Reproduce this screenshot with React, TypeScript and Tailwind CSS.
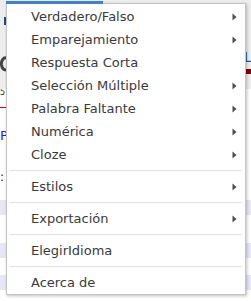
import React from "react";

const Arrow = () => (
  <svg width="5" height="8" viewBox="0 0 5 8" className="shrink-0">
    <path d="M0.5 0.5 L4.5 4 L0.5 7.5 Z" fill="#4d4d4d" />
  </svg>
);

type Item = { label: string; sub?: boolean } | "sep";

const items: Item[] = [
  { label: "Verdadero/Falso", sub: true },
  { label: "Emparejamiento", sub: true },
  { label: "Respuesta Corta" },
  { label: "Selección Múltiple", sub: true },
  { label: "Palabra Faltante", sub: true },
  { label: "Numérica", sub: true },
  { label: "Cloze", sub: true },
  "sep",
  { label: "Estilos", sub: true },
  "sep",
  { label: "Exportación", sub: true },
  "sep",
  { label: "ElegirIdioma" },
  "sep",
  { label: "Acerca de" },
];

export default function App() {
  return (
    <div
      className="relative w-[251px] h-[301px] overflow-hidden bg-white"
      style={{ fontFamily: '"DejaVu Sans", sans-serif' }}
    >
      {/* background page (mostly hidden behind the menu) */}
      <div className="flex flex-col">
        <div className="h-[89px] bg-[#ededed] flex justify-between pt-[17px]">
          <div className="flex flex-col items-start">
            <div className="ml-[4px] w-[2px] h-[8px] bg-[#2a4a7a]" />
            <svg width="7" height="16" viewBox="0 0 7 16" className="mt-[31px]">
              <path d="M7 2 C3 1 1 5 1.5 9 C2 12 4 14 6 14" stroke="#444" strokeWidth="3" fill="none" />
            </svg>
          </div>
          <div className="flex flex-col items-end">
            <div className="mt-[32px] -mr-[1px] w-[8px] text-[14px] leading-[16px] text-[#2455a8]">L</div>
            <div className="mt-[4px] w-[6px] h-[5px] bg-[#8b0000]" />
          </div>
        </div>
        <div className="flex flex-col items-start">
          <div className="w-[6px] h-[9px] bg-white text-[8px] leading-[8px] text-[#333] overflow-hidden">5</div>
          <div className="mt-[9px] w-[6px] h-px bg-[#e00000]" />
          <div className="mt-[20px] text-[13px] leading-[16px] text-[#1a1aff]">Pe</div>
          <div className="mt-[26px] text-[12px] leading-[14px] text-[#222]">:</div>
        </div>
        <div className="mt-[16px] flex flex-col gap-[28px]">
          <div className="h-[15px] bg-[#e6e6f7]" />
          <div className="h-[15px] bg-[#e6e6f7]" />
        </div>
        <div className="mt-[17px] h-[15px] bg-[#e6e6f7]" />
        <div className="mt-[15px] h-[10px] bg-[#e6e6f7]" />
      </div>

      {/* menu overlay */}
      <div className="absolute left-[6px] top-[3px] w-[240px] bg-white border border-[#c4c4c4] shadow-[1px_1px_3px_rgba(0,0,0,0.25)] flex flex-col pt-[1px]">
        {items.map((it, i) =>
          it === "sep" ? (
            <div key={i} className="my-[4px] mx-[3px] h-px bg-[#e2e2e2]" />
          ) : (
            <div
              key={i}
              className="h-[23px] flex items-center justify-between pl-[24px] pr-[8px] text-[13px] text-[#3a3a3a]"
            >
              <span>{it.label}</span>
              {it.sub ? <Arrow /> : null}
            </div>
          )
        )}
      </div>
      <div className="absolute left-[6px] top-[1px] w-[97px] h-[3px] bg-[#3f7fd6]" />
    </div>
  );
}
